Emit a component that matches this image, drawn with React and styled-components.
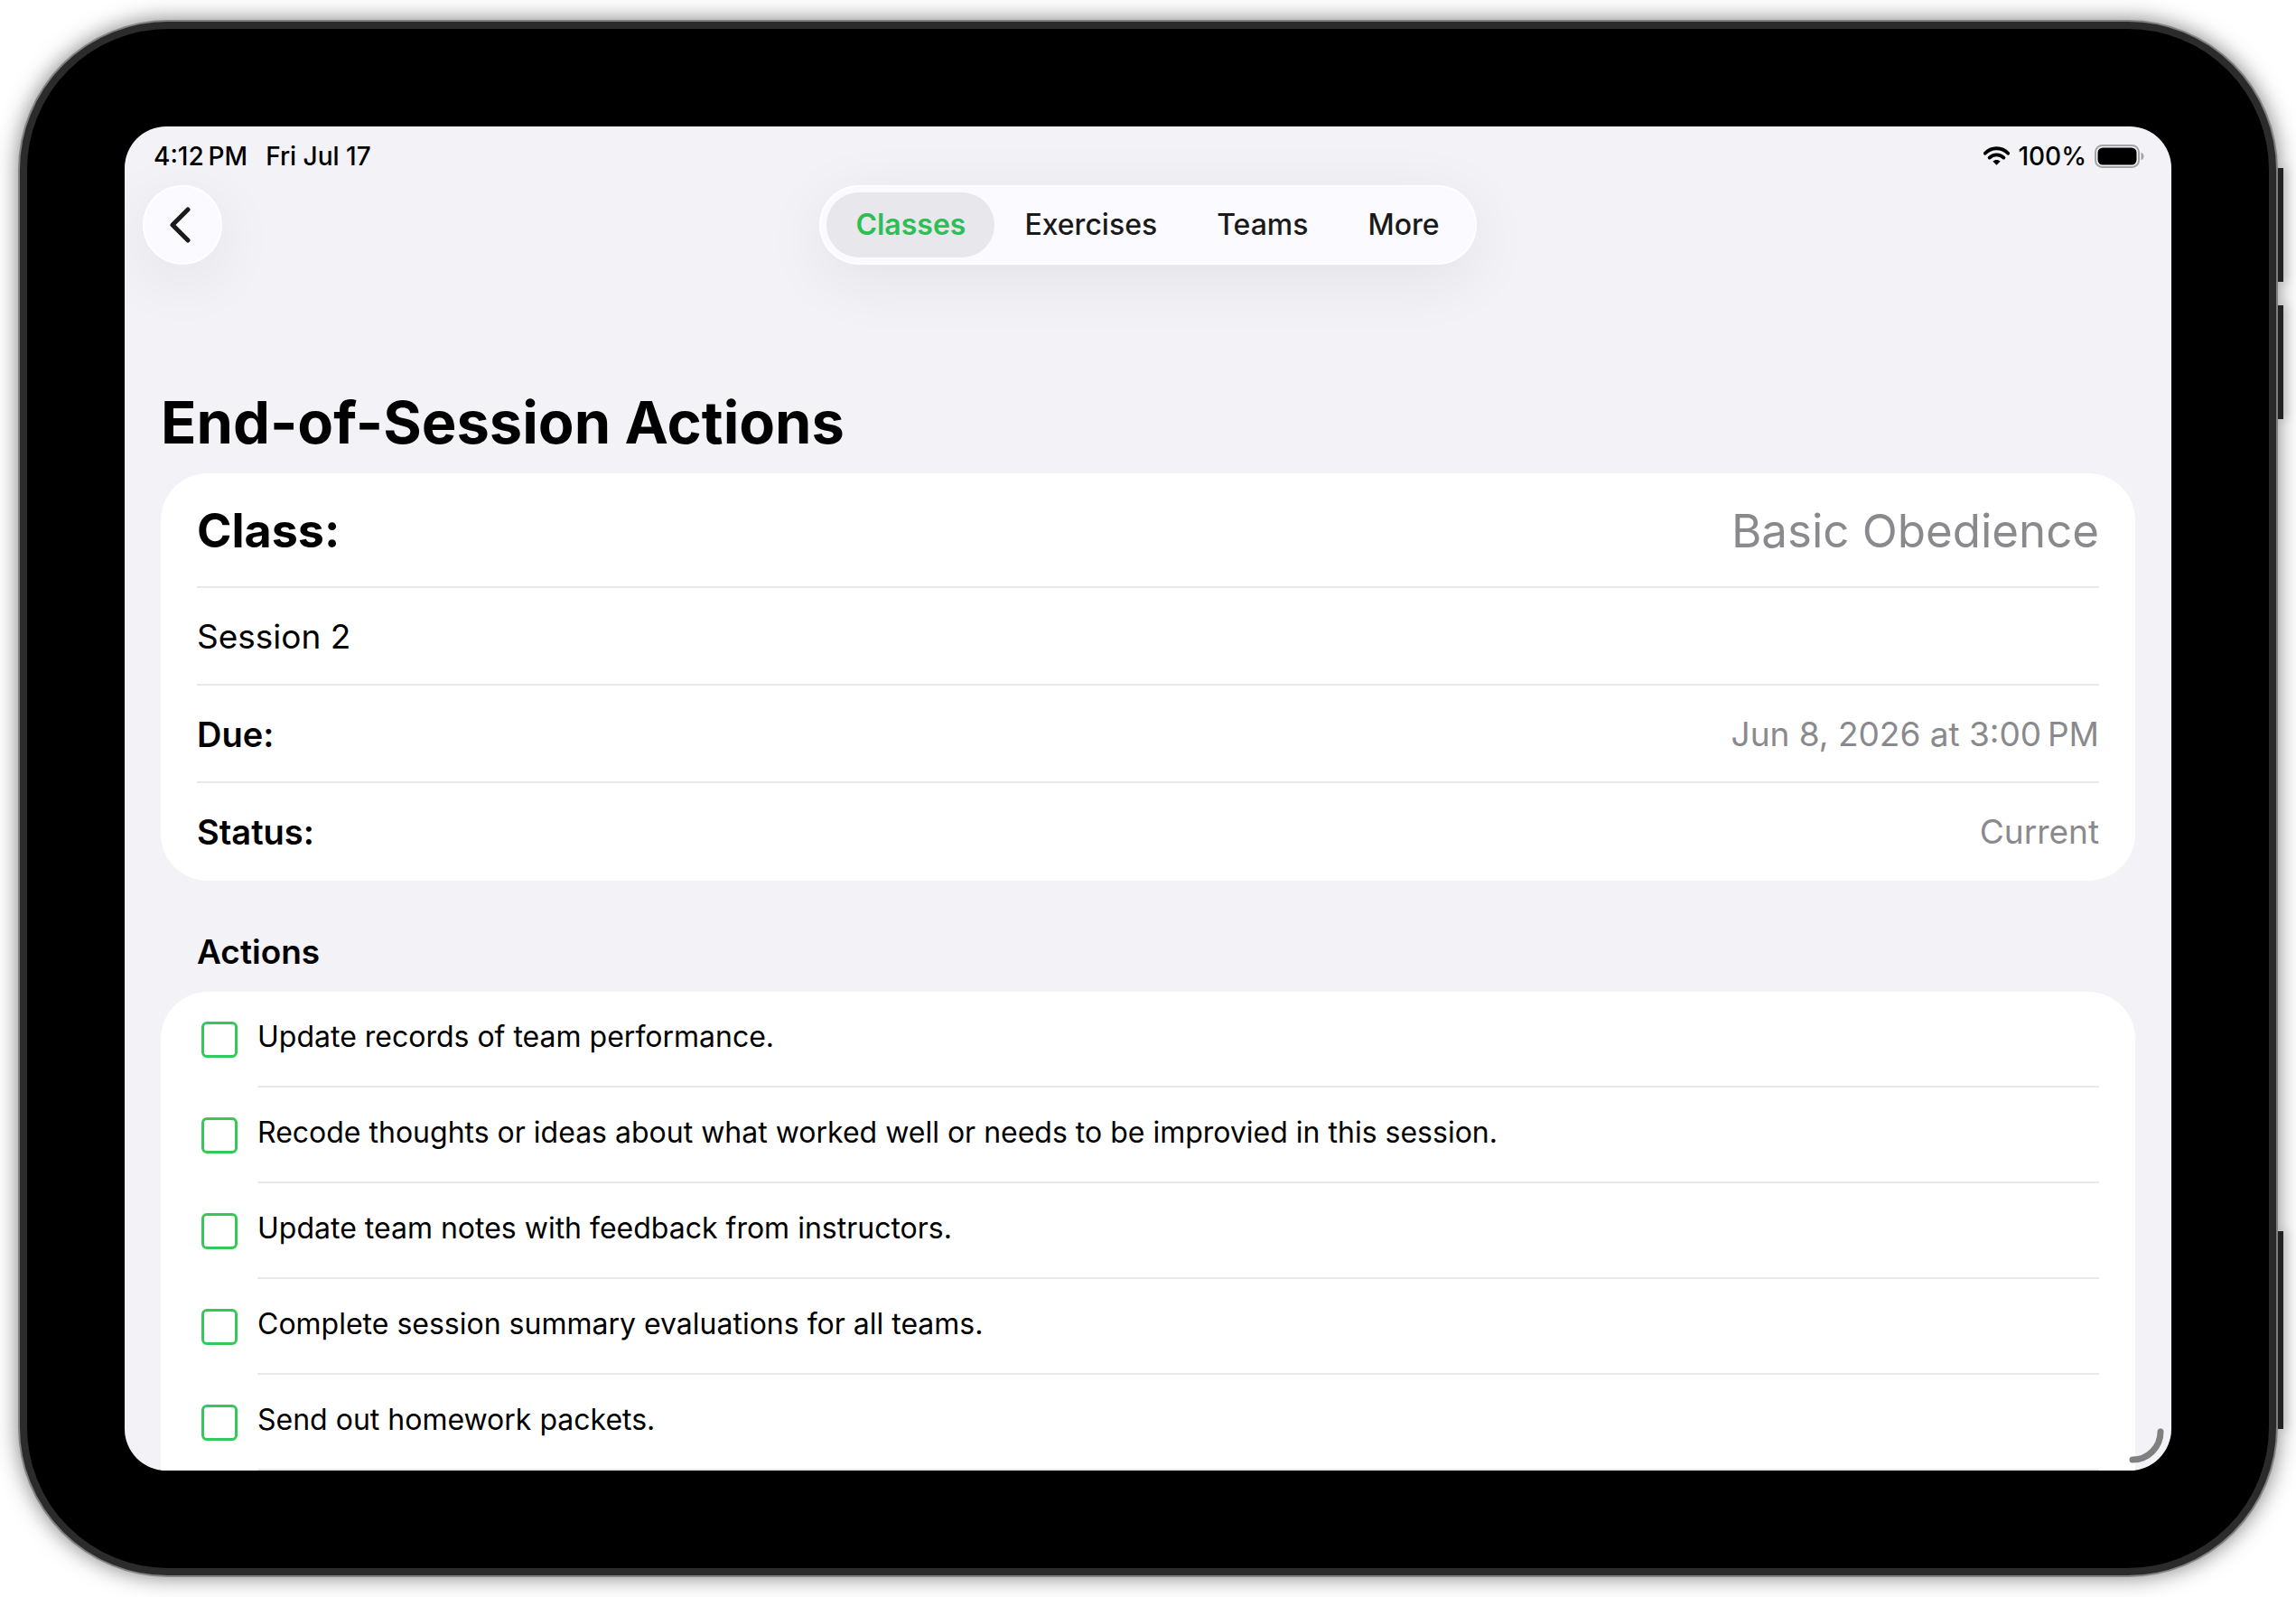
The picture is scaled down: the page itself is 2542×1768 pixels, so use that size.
import React, { useState } from "react";
import styled, { createGlobalStyle } from "styled-components";

const GlobalStyle = createGlobalStyle`
  *, *::before, *::after { box-sizing: border-box; }
  html, body { margin: 0; background: #ffffff; }
  body, button, input {
    font-family: Inter, Roboto, "Liberation Sans", sans-serif;
  }
`;

const Stage = styled.div`
  display: flex;
  height: 100vh;
  padding: 24px 22px;
  overflow: hidden;
`;

const Device = styled.div`
  position: relative;
  display: flex;
  flex: 1;
  min-width: 0;
  padding: 108px;
  border: 8px solid #2b2b2b;
  border-radius: 164px;
  background: #000000;
  box-shadow: 0 0 0 2px rgba(60, 60, 60, 0.45), 0 0 24px 2px rgba(0, 0, 0, 0.5);
`;

const SideKey = styled.span`
  position: absolute;
  left: calc(100% + 10px);
  top: ${(p) => p.$top}px;
  width: 6px;
  height: ${(p) => p.$length}px;
  background: #222222;
  box-shadow: 4px 0 12px rgba(0, 0, 0, 0.2);
`;

const Screen = styled.div`
  position: relative;
  display: flex;
  flex-direction: column;
  flex: 1;
  min-width: 0;
  overflow: hidden;
  border-radius: 46px;
  background: #f2f2f7;
  color: #000000;
`;

const StatusBar = styled.div`
  display: flex;
  flex: none;
  justify-content: space-between;
  align-items: center;
  height: 65px;
  padding: 0 30px 0 32px;
  font-size: 28px;
  font-weight: 500;
  line-height: 36px;
`;

const StatusGroup = styled.div`
  display: flex;
  align-items: center;
  gap: ${(p) => p.$gap}px;
`;

const NavBar = styled.header`
  display: grid;
  flex: none;
  grid-template-columns: 1fr auto 1fr;
  align-items: center;
  padding: 0 20px;
`;

const floating = `
  background: #fafaff;
  box-shadow: inset 0 0 0 2px #ffffff, 0 16px 72px rgba(0, 0, 0, 0.07);
`;

const BackButton = styled.button`
  display: flex;
  justify-content: center;
  align-items: center;
  width: 88px;
  height: 88px;
  padding: 0;
  border: 0;
  border-radius: 50%;
  color: #1a1a1a;
  cursor: pointer;
  ${floating}
`;

const Tabs = styled.nav`
  display: flex;
  padding: 8px;
  border-radius: 44px;
  ${floating}
`;

const Tab = styled.button`
  height: 72px;
  padding: 0 32px;
  border: 0;
  border-radius: 36px;
  background: ${(p) => (p.$active ? "#e8e7ec" : "transparent")};
  color: ${(p) => (p.$active ? "#2dbe55" : "#1a1a1a")};
  font-size: 32px;
  font-weight: ${(p) => (p.$active ? 600 : 500)};
  line-height: 40px;
  cursor: pointer;

  & + & {
    padding: 0 33px;
  }
`;

const Content = styled.main`
  display: flex;
  flex: 1;
  flex-direction: column;
  min-height: 0;
  padding: 135px 40px 0;
`;

const PageTitle = styled.h1`
  margin: 0 0 16px;
  font-size: 65px;
  font-weight: 700;
  line-height: 80px;
`;

const Card = styled.section`
  flex: ${(p) => (p.$continues ? "1 0 auto" : "none")};
  padding: 0 40px;
  border-radius: ${(p) => (p.$continues ? "52px 52px 0 0" : "52px")};
  background: #ffffff;
`;

const DetailList = styled.dl`
  margin: 0;
`;

const DetailRow = styled.div`
  display: flex;
  justify-content: space-between;
  align-items: center;
  height: ${(p) => (p.$large ? 127 : 108)}px;
  padding-top: 3px;
  border-bottom: 2px solid #e9e9ea;
  line-height: 1.2;

  &:last-child {
    border-bottom-color: transparent;
  }
`;

const Term = styled.dt`
  font-size: ${(p) => (p.$large ? 52 : p.$plain ? 37 : 38)}px;
  font-weight: ${(p) => (p.$large ? 700 : p.$plain ? 400 : 600)};
`;

const Value = styled.dd`
  margin: 0;
  color: #8a8a8e;
  font-size: ${(p) => (p.$large ? 51 : 37)}px;
`;

const SectionTitle = styled.h2`
  flex: none;
  margin: 0;
  padding: 55px 40px 20px;
  font-size: 37px;
  font-weight: 600;
  line-height: 48px;
`;

const ActionList = styled.ul`
  margin: 0;
  padding: 0;
  list-style: none;
`;

const ActionItem = styled.li`
  display: flex;
  align-items: center;
  height: 106px;
`;

const CheckBox = styled.input`
  flex: none;
  width: 40px;
  height: 40px;
  margin: 0 22px 0 5px;
  border: 3px solid #34c759;
  border-radius: 6px;
  background: #ffffff;
  appearance: none;
  cursor: pointer;

  &:checked {
    background: #34c759;
  }
`;

const ActionLabel = styled.label`
  display: flex;
  flex: 1;
  align-items: center;
  height: 106px;
  padding-bottom: 4px;
  border-bottom: 2px solid #e9e9ea;
  font-size: 32px;
  line-height: 44px;
  cursor: pointer;
`;

const ResizeGrip = styled.svg`
  position: absolute;
  right: 8px;
  bottom: 8px;
`;

function ChevronIcon() {
  return (
    <svg width="28" height="40" viewBox="0 0 28 40" fill="none" aria-hidden="true">
      <path
        d="M20 3 3 20 20 37"
        stroke="currentColor"
        strokeWidth="5"
        strokeLinecap="round"
        strokeLinejoin="round"
      />
    </svg>
  );
}

function WifiIcon() {
  return (
    <svg width="29" height="21" viewBox="0 0 29 21" fill="none" aria-hidden="true">
      <path d="M1.800 7.800C8.600.400 20.400.400 27.200 7.800" stroke="#000" strokeWidth="3.800" strokeLinecap="round" />
      <path d="M6.600 12.600c4.200-4.400 11.600-4.400 15.800 0" stroke="#000" strokeWidth="3.800" strokeLinecap="round" />
      <path d="M10.300 16.600c2.300-2.200 6.100-2.200 8.400 0l-4.200 4.200z" fill="#000" />
    </svg>
  );
}

function BatteryIcon() {
  return (
    <svg width="55" height="26" viewBox="0 0 55 26" fill="none" aria-hidden="true">
      <rect x="1" y="1" width="48" height="24" rx="7.500" stroke="#a3a3a8" strokeWidth="2" />
      <rect x="3.500" y="3.500" width="43" height="19" rx="5.500" fill="#000" />
      <path d="M51.500 8.800c4 1.500 4 6.900 0 8.400z" fill="#a3a3a8" />
    </svg>
  );
}

const tabs = ["Classes", "Exercises", "Teams", "More"];

const details = [
  { term: "Class:", value: "Basic Obedience", large: true },
  { term: "Session 2", plain: true },
  { term: "Due:", value: "Jun 8, 2026 at 3:00\u202fPM" },
  { term: "Status:", value: "Current" },
];

const actions = [
  "Update records of team performance.",
  "Recode thoughts or ideas about what worked well or needs to be improvied in this session.",
  "Update team notes with feedback from instructors.",
  "Complete session summary evaluations for all teams.",
  "Send out homework packets.",
];

export default function App() {
  const [activeTab, setActiveTab] = useState("Classes");

  return (
    <>
      <GlobalStyle />
      <Stage>
        <Device>
          <SideKey $top={154} $length={126} />
          <SideKey $top={306} $length={126} />
          <SideKey $top={1331} $length={219} />
          <Screen>
            <StatusBar>
              <StatusGroup $gap={20}>
                <span>{"4:12\u202fPM"}</span>
                <span>Fri Jul 17</span>
              </StatusGroup>
              <StatusGroup $gap={9}>
                <WifiIcon />
                <span>100%</span>
                <BatteryIcon />
              </StatusGroup>
            </StatusBar>
            <NavBar>
              <BackButton type="button" aria-label="Back">
                <ChevronIcon />
              </BackButton>
              <Tabs>
                {tabs.map((tab) => (
                  <Tab
                    key={tab}
                    type="button"
                    $active={tab === activeTab}
                    onClick={() => setActiveTab(tab)}
                  >
                    {tab}
                  </Tab>
                ))}
              </Tabs>
            </NavBar>
            <Content>
              <PageTitle>End-of-Session Actions</PageTitle>
              <Card>
                <DetailList>
                  {details.map(({ term, value, large, plain }) => (
                    <DetailRow key={term} $large={large}>
                      <Term $large={large} $plain={plain}>{term}</Term>
                      {value && <Value $large={large}>{value}</Value>}
                    </DetailRow>
                  ))}
                </DetailList>
              </Card>
              <SectionTitle>Actions</SectionTitle>
              <Card $continues>
                <ActionList>
                  {actions.map((action, index) => (
                    <ActionItem key={action}>
                      <CheckBox type="checkbox" id={`action-${index}`} />
                      <ActionLabel htmlFor={`action-${index}`}>{action}</ActionLabel>
                    </ActionItem>
                  ))}
                </ActionList>
              </Card>
            </Content>
            <ResizeGrip width="40" height="40" viewBox="0 0 40 40" fill="none" aria-hidden="true">
              <path d="M36 5A31 31 0 0 1 5 36" stroke="#808080" strokeWidth="7" strokeLinecap="round" />
            </ResizeGrip>
          </Screen>
        </Device>
      </Stage>
    </>
  );
}
